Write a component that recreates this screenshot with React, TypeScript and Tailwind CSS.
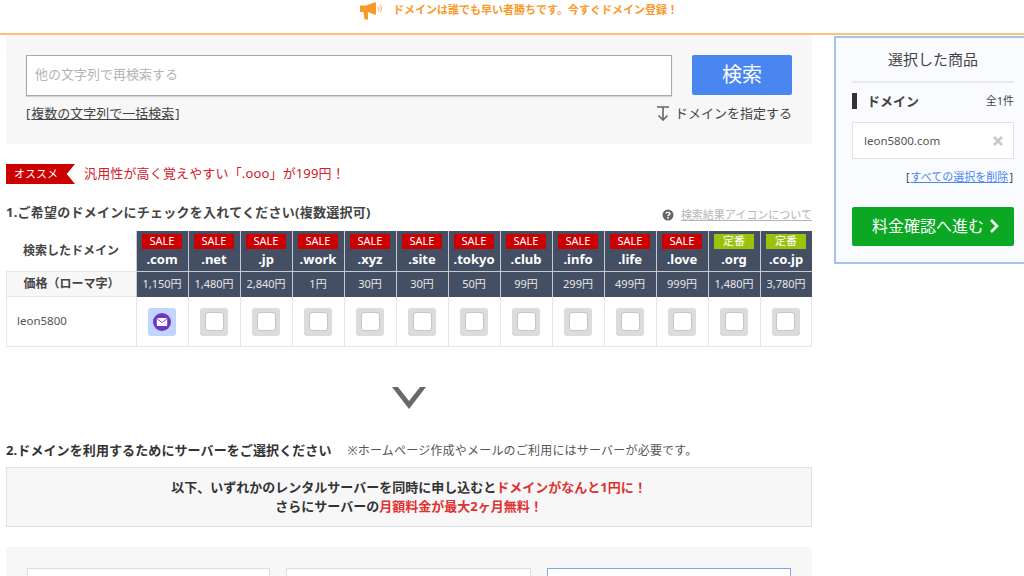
const font = "font-['Noto_Sans','Noto_Sans_CJK_JP',sans-serif]";

const domains = [
  { tld: ".com", price: "1,150円", tag: "SALE" },
  { tld: ".net", price: "1,480円", tag: "SALE" },
  { tld: ".jp", price: "2,840円", tag: "SALE" },
  { tld: ".work", price: "1円", tag: "SALE" },
  { tld: ".xyz", price: "30円", tag: "SALE" },
  { tld: ".site", price: "30円", tag: "SALE" },
  { tld: ".tokyo", price: "50円", tag: "SALE" },
  { tld: ".club", price: "99円", tag: "SALE" },
  { tld: ".info", price: "299円", tag: "SALE" },
  { tld: ".life", price: "499円", tag: "SALE" },
  { tld: ".love", price: "999円", tag: "SALE" },
  { tld: ".org", price: "1,480円", tag: "定番" },
  { tld: ".co.jp", price: "3,780円", tag: "定番" },
];

function Megaphone() {
  return (
    <svg width="24" height="18" viewBox="0 0 24 18" fill="#f9992b">
      <path d="M0 3.5h6L14 0.5h2v12h-2L8 10v7.5H4.5L3.5 10H0z" />
      <path d="M18 4.5c1.2 1 1.2 3.5 0 4.5M20 3c1.8 1.8 1.8 5.5 0 7.5" fill="none" stroke="#f9992b" strokeWidth="0.9" />
    </svg>
  );
}

function MailIcon() {
  return (
    <div className="w-[28px] h-[28px] rounded-[3px] bg-[#c0d5ff] flex items-center justify-center">
      <svg width="18" height="18" viewBox="0 0 18 18">
        <circle cx="9" cy="9" r="9" fill="#6f35bd" />
        <rect x="3.8" y="5" width="10.4" height="8" rx="0.8" fill="#fff" />
        <path d="M4 5.6 9 9.6l5-4" fill="none" stroke="#6f35bd" strokeWidth="0.9" />
      </svg>
    </div>
  );
}

function CheckBox() {
  return (
    <div className="w-[28px] h-[28px] rounded-[3px] bg-[#dcdcdc] flex items-center justify-center">
      <div className="w-[19px] h-[19px] rounded-[3px] bg-white border border-[#c4c4c4]" />
    </div>
  );
}

function QuestionIcon() {
  return (
    <svg width="12" height="12" viewBox="0 0 12 12">
      <circle cx="6" cy="6" r="5.5" fill="#666" />
      <path d="M4 4.6C4 3 8 3 8 4.7 8 6 6 5.8 6 7.2" fill="none" stroke="#fff" strokeWidth="1.4" />
      <rect x="5.2" y="8.1" width="1.6" height="1.6" fill="#fff" />
    </svg>
  );
}

function SearchPanel() {
  return (
    <div className="bg-[#f7f7f7] h-[109px] pt-[20px] px-[20px]">
      <div className="flex justify-between">
        <div className="w-[646px] h-[41px] bg-white border border-[#a8a8a8] shadow-[0_1px_1px_rgba(0,0,0,0.15)] flex items-center pl-[8px] pb-[2px] text-[13px] text-[#b4b4b4]">
          他の文字列で再検索する
        </div>
        <div className="w-[100px] h-[40px] rounded-[2px] bg-[#4a86f0] text-white text-[20px] flex items-center justify-center">
          検索
        </div>
      </div>
      <div className="flex justify-between items-center mt-[8px] text-[13px] text-[#444]">
        <span>
          [<span className="underline px-[1px]">複数の文字列で一括検索</span>]
        </span>
        <span className="flex items-center gap-[6px]">
          <svg width="12" height="15" viewBox="0 0 12 15" fill="none" stroke="#666" strokeWidth="1.6">
            <path d="M0 1h12M6 1v13M1.5 9.5 6 14l4.5-4.5" />
          </svg>
          ドメインを指定する
        </span>
      </div>
    </div>
  );
}

function DomainTable() {
  return (
    <div className="grid grid-cols-[130px_repeat(13,1fr)] text-[#444]">
      <div className="h-[40px] flex items-center justify-center text-[12px] font-bold">検索したドメイン</div>
      {domains.map((d) => (
        <div key={d.tld} className="h-[40px] bg-[#454f63] border-l border-[#c6cad2] flex flex-col items-center pt-[3px] pr-[1px]">
          <div className={`w-[40px] h-[15px] flex items-center justify-center text-[11px] text-white ${d.tag === "SALE" ? "bg-[#cc0000]" : "bg-[#9bc20a]"}`}>
            {d.tag}
          </div>
          <div className="text-[13px] leading-[20px] font-bold text-white">{d.tld}</div>
        </div>
      ))}
      <div className="h-[26px] bg-[#f7f7f7] border-y border-l border-[#e6e6e6] flex items-center justify-center text-[12px] font-bold">
        価格（ローマ字）
      </div>
      {domains.map((d) => (
        <div key={d.tld} className="h-[26px] bg-[#454f63] border-l border-t border-[#c6cad2] flex items-center justify-center pr-[1px] text-[11px] text-[#e8e8e8]">
          {d.price}
        </div>
      ))}
      <div className="h-[50px] border-b border-l border-[#e8e8e8] flex items-center pl-[10px] pb-[2px] text-[11.5px] text-[#555]">leon5800</div>
      {domains.map((d, i) => (
        <div key={d.tld} className="h-[50px] border-b border-l last:border-r border-[#e8e8e8] flex items-center justify-center pr-[1px]">
          {i === 0 ? <MailIcon /> : <CheckBox />}
        </div>
      ))}
    </div>
  );
}

function Sidebar() {
  return (
    <div className="w-[198px] h-[228px] shrink-0 mt-[1px] bg-[#f9fbff] border-2 border-[#a6c3ef] px-[16px] text-[#444]">
      <div className="h-[45px] flex items-center justify-center text-[15px] border-b-2 border-[#eaeaea]">選択した商品</div>
      <div className="flex items-center justify-between mt-[9px] h-[18px]">
        <span className="border-l-[5px] border-[#333] pl-[10px] text-[13px] font-bold leading-[16px]">ドメイン</span>
        <span className="text-[11px]">全1件</span>
      </div>
      <div className="h-[37px] mt-[12px] bg-white border border-[#e2e2e2] flex items-center justify-between pl-[11px] pr-[10px] text-[11.5px] text-[#555]">
        leon5800.com
        <svg width="10" height="10" viewBox="0 0 10 10" fill="none" stroke="#c8c8c8" strokeWidth="2.6">
          <path d="M1 1l8 8M9 1l-8 8" />
        </svg>
      </div>
      <div className="text-right text-[11px] leading-[18px] mt-[9px] pr-[1px]">
        [<span className="underline text-[#4a86f0] px-[1px]">すべての選択を削除</span>]
      </div>
      <div className="h-[39px] mt-[21px] rounded-[2px] bg-[#0aa823] text-white text-[16px] flex items-center justify-center gap-[5px] pl-[6px] pb-[2px]">
        料金確認へ進む
        <svg width="11" height="14" viewBox="0 0 10 14" fill="none" stroke="#fff" strokeWidth="2.6">
          <path d="M1.5 1 7.5 7l-6 6" />
        </svg>
      </div>
    </div>
  );
}

export default function App() {
  return (
    <div className={`w-[1024px] h-[576px] overflow-hidden bg-white ${font}`}>
      <div className="h-[35px] border-b-2 border-[#fcc27c] flex items-center justify-center gap-[9px] text-[11px] font-bold text-[#f9992b] pb-[12px] pl-[14px]">
        <Megaphone />
        ドメインは誰でも早い者勝ちです。今すぐドメイン登録！
      </div>
      <div className="flex pl-[6px] gap-[22px]">
        <div className="w-[806px] shrink-0">
          <SearchPanel />
          <div className="flex items-center mt-[20px] h-[20px]">
            <div className="w-[69px] h-[20px] bg-[#cc0000] text-white text-[11px] flex items-center pl-[8px] [clip-path:polygon(0_0,100%_0,88%_50%,100%_100%,0_100%)]">
              オススメ
            </div>
            <span className="ml-[9px] text-[13px] text-[#d0202a] tracking-[0.15px]">汎用性が高く覚えやすい「.ooo」が199円！</span>
          </div>
          <div className="flex items-center justify-between mt-[19px] h-[20px] text-[#444]">
            <span className="text-[13px] font-bold tracking-[0.25px]">1.ご希望のドメインにチェックを入れてください(複数選択可)</span>
            <span className="flex items-center gap-[7px] text-[11px] text-[#b4b4b4] underline pt-[4px]">
              <QuestionIcon />
              検索結果アイコンについて
            </span>
          </div>
          <div className="mt-[8px]">
            <DomainTable />
          </div>
          <div className="flex justify-center mt-[39px]">
            <svg width="34" height="24" viewBox="0 0 34 24" fill="#646a6e">
              <path d="M0 1h6l11 14L28 1h6L17 23z" />
            </svg>
          </div>
          <div className="flex items-center mt-[31px] h-[20px] text-[#333]">
            <span className="text-[13px] font-bold tracking-[0.1px]">2.ドメインを利用するためにサーバーをご選択ください</span>
            <span className="ml-[16px] text-[12px] text-[#555] tracking-[0.2px]">※ホームページ作成やメールのご利用にはサーバーが必要です。</span>
          </div>
          <div className="h-[60px] mt-[6px] bg-[#f7f7f7] border border-[#e0e0e0] flex flex-col items-center justify-center pb-[1px] text-[13px] leading-[19px] font-bold text-[#333]">
            <div>
              以下、いずれかのレンタルサーバーを同時に申し込むと<span className="text-[#e03030]">ドメインがなんと1円に！</span>
            </div>
            <div>
              さらにサーバーの<span className="text-[#e03030]">月額料金が最大2ヶ月無料！</span>
            </div>
          </div>
          <div className="mt-[20px] bg-[#f7f7f7] pt-[21px] px-[21px] h-[60px] flex gap-[16px]">
            <div className="w-[244px] h-[40px] bg-white border border-[#dedede]" />
            <div className="w-[245px] h-[40px] bg-white border border-[#dedede]" />
            <div className="w-[245px] h-[40px] bg-white border border-[#7ea6ee]" />
          </div>
        </div>
        <Sidebar />
      </div>
    </div>
  );
}
